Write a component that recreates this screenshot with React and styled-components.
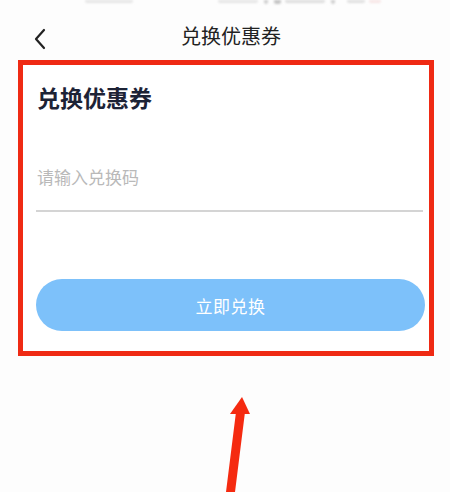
import React from "react";
import styled, { createGlobalStyle } from "styled-components";

const Global = createGlobalStyle`
  html, body { margin: 0; padding: 0; background: #fff; }
  body { font-family: "Noto Sans CJK SC", "Noto Sans", sans-serif; }
  * { box-sizing: border-box; }
`;

const Page = styled.div`
  position: relative;
  width: 450px;
  height: 492px;
  overflow: hidden;
  background: #fdfdfd;
`;

const StatusBar = styled.div`
  height: 6px;
  display: flex;
  align-items: flex-start;
  padding-left: 85px;
`;

const Blob = styled.div`
  width: ${(p) => p.$w}px;
  height: ${(p) => p.$h || 3}px;
  margin-left: ${(p) => p.$ml || 0}px;
  background: ${(p) => p.$c || "#e6e6e6"};
  border-radius: 0 0 2px 2px;
  filter: blur(0.8px);
`;

const Header = styled.div`
  height: 54px;
  display: flex;
  align-items: center;
  position: relative;
  justify-content: center;
`;

const Back = styled.svg`
  position: absolute;
  left: 33px;
  top: 20px;
`;

const HeaderTitle = styled.div`
  font-size: 20px;
  color: #222;
  margin-left: 12px;
  margin-top: 5px;
`;

const Box = styled.div`
  margin-left: 18px;
  width: 416px;
  height: 296px;
  border: 5px solid #ef2a14;
  background: #fff;
  padding: 0 4px 0 13px;
  display: flex;
  flex-direction: column;
`;

const CardTitle = styled.div`
  margin-top: 17px;
  height: 30px;
  line-height: 30px;
  font-size: 23px;
  font-weight: 700;
  color: #1d2336;
  padding-left: 1px;
`;

const Field = styled.div`
  margin-top: 50px;
  height: 50px;
  display: flex;
  align-items: center;
  border-bottom: 2px solid #d4d4d4;
  margin-right: 2px;
  padding-left: 1px;
  padding-bottom: 20px;
`;

const Placeholder = styled.span`
  font-size: 17px;
  color: #b9b9b9;
`;

const Button = styled.div`
  margin-top: 67px;
  height: 52px;
  border-radius: 26px;
  background: #7dc1fa;
  color: #fff;
  font-size: 17px;
  display: flex;
  align-items: center;
  justify-content: center;
  letter-spacing: 0.5px;
`;

const Arrow = styled.svg`
  position: absolute;
  left: 0;
  top: 0;
`;

export default function App() {
  return (
    <Page>
      <Global />
      <StatusBar>
        <Blob $w={48} />
        <Blob $w={40} $ml={85} />
        <Blob $w={4} $ml={6} $h={4} $c="#cfcfcf" />
        <Blob $w={7} $ml={6} $h={4} $c="#c4c4c4" />
        <Blob $w={40} $ml={4} $c="#dedede" />
        <Blob $w={4} $ml={6} $h={4} $c="#cfcfcf" />
        <Blob $w={18} $ml={12} $c="#e0e0e0" />
        <Blob $w={12} $ml={4} $c="#f7e6e6" />
      </StatusBar>
      <Header>
        <Back width="14" height="26" viewBox="0 0 14 26">
          <path d="M11 4 L3 13 L11 22" fill="none" stroke="#222" strokeWidth="2.2" strokeLinecap="round" strokeLinejoin="round" />
        </Back>
        <HeaderTitle>兑换优惠券</HeaderTitle>
      </Header>
      <Box>
        <CardTitle>兑换优惠券</CardTitle>
        <Field>
          <Placeholder>请输入兑换码</Placeholder>
        </Field>
        <Button>立即兑换</Button>
      </Box>
      <Arrow width="450" height="492" viewBox="0 0 450 492">
        <polygon points="242,397 230,414 250,414" fill="#f52a10" />
        <polygon points="236,412 245,412 235,492 226,492" fill="#f52a10" />
      </Arrow>
    </Page>
  );
}
